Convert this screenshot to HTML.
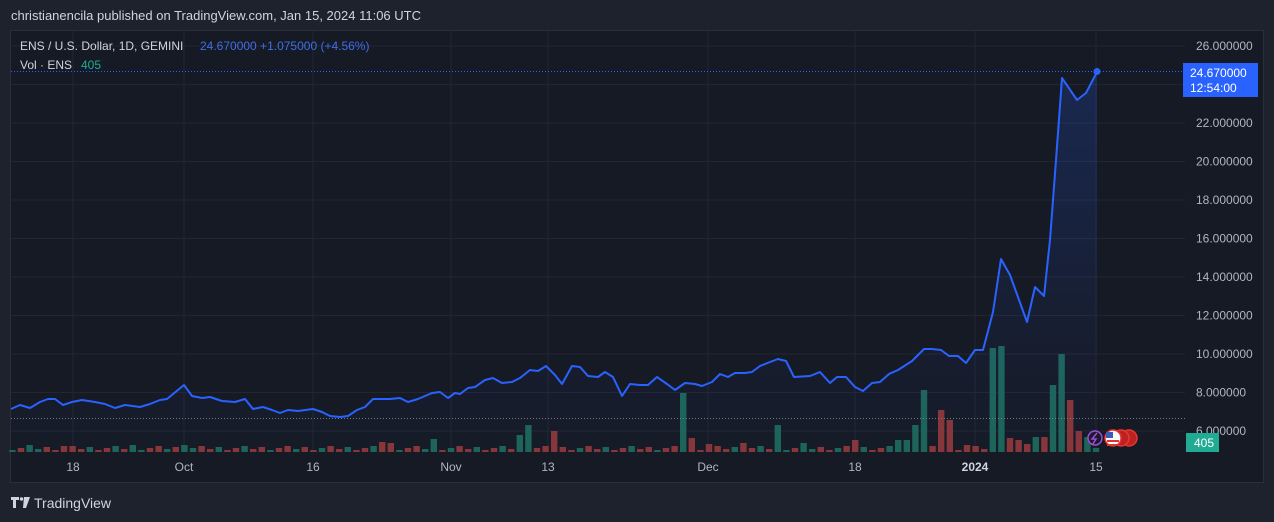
<!DOCTYPE html>
<html><head><meta charset="utf-8"><style>
html,body{margin:0;padding:0;background:#1e222d;width:1274px;height:522px;overflow:hidden;font-family:"Liberation Sans",sans-serif}
.t{position:absolute;white-space:nowrap}
</style></head><body>
<div class="t" style="left:11px;top:8px;font-size:13px;color:#d1d4dc">christianencila published on TradingView.com, Jan 15, 2024 11:06 UTC</div>
<svg width="1274" height="522" style="position:absolute;left:0;top:0" id="s">
<defs><linearGradient id="g" x1="0" y1="0" x2="0" y2="1"><stop offset="0" stop-color="#2962ff" stop-opacity="0.2"/><stop offset="0.7" stop-color="#2962ff" stop-opacity="0.05"/><stop offset="1" stop-color="#2962ff" stop-opacity="0.01"/></linearGradient></defs>
<rect x="10.5" y="30.5" width="1253" height="452" fill="#161a25" stroke="#2a2e39"/>
<g id="grid" stroke="#222633" stroke-width="1"></g>
<g id="vol"></g>
<path id="area" fill="url(#g)"/>
<line x1="11" y1="418.5" x2="1185" y2="418.5" stroke="#787b86" stroke-dasharray="1 2"/>
<line x1="11" y1="71.5" x2="1185" y2="71.5" stroke="#2962ff" stroke-dasharray="1 2"/>
<polyline id="ln" fill="none" stroke="#2962ff" stroke-width="2" stroke-linejoin="round"/>
<circle cx="1097" cy="71.5" r="3.5" fill="#2962ff"/>
<g font-family="Liberation Sans" font-size="12" fill="#b2b5be" id="lab"></g>
<rect x="1183" y="63" width="75" height="34" fill="#2962ff"/>
<text x="1190" y="77" font-size="12" fill="#fff" font-family="Liberation Sans">24.670000</text>
<text x="1190" y="92" font-size="12" fill="#fff" font-family="Liberation Sans">12:54:00</text>
<rect x="1186" y="433" width="33" height="19" fill="#22ab94"/>
<text x="1194" y="447" font-size="12" fill="#fff" font-family="Liberation Sans">405</text>
<circle cx="1095" cy="438" r="7" fill="#1e1a2e" stroke="#9c4ed8" stroke-width="1.5"/>
<path d="M1097 433 L1092 439 L1096 439 L1093 444" stroke="#9c4ed8" stroke-width="1.5" fill="none"/>
<circle cx="1129" cy="438" r="8" fill="#b22" stroke="#e33" stroke-width="1.5"/>
<circle cx="1121" cy="438" r="8" fill="#b22" stroke="#e33" stroke-width="1.5"/>
<circle cx="1113" cy="438" r="8" fill="#fff" stroke="#e33" stroke-width="1.5"/>
<rect x="1107" y="440" width="12" height="2" fill="#d33"/><rect x="1107" y="444" width="12" height="2" fill="#d33"/>
<rect x="1106" y="432" width="7" height="6" fill="#3c5bb8"/>
<text x="20" y="50" font-size="12" fill="#d1d4dc" font-family="Liberation Sans">ENS / U.S. Dollar, 1D, GEMINI</text>
<text x="200" y="50" font-size="12" fill="#3f6ee8" font-family="Liberation Sans">24.670000  +1.075000 (+4.56%)</text>
<text x="20" y="69" font-size="12" fill="#d1d4dc" font-family="Liberation Sans">Vol · ENS</text>
<text x="81" y="69" font-size="12" fill="#22ab94" font-family="Liberation Sans">405</text>
<g fill="#d1d4dc"><path d="M11 497h8v3h-3v8h-3v-8h-2z"/><circle cx="21.5" cy="499" r="1.7"/><path d="M24 497h6l-4 11h-3z"/></g>
<text x="34" y="508" font-size="14" fill="#d1d4dc" font-family="Liberation Sans">TradingView</text>
</svg>
<script>
var ns="http://www.w3.org/2000/svg";function el(p,t,a,txt){var e=document.createElementNS(ns,t);for(var k in a)e.setAttribute(k,a[k]);if(txt)e.textContent=txt;document.getElementById(p).appendChild(e);return e}
for(var v=26;v>=6;v-=2){var y=46+(26-v)*19.25;el("grid","line",{x1:11,x2:1185,y1:y,y2:y});el("lab","text",{x:1196,y:y+4},v.toFixed(6))}
var xs=[[73,"18"],[184,"Oct"],[313,"16"],[451,"Nov"],[548,"13"],[708,"Dec"],[855,"18"],[975,"2024"],[1096,"15"]];
xs.forEach(function(a){el("grid","line",{x1:a[0],x2:a[0],y1:31,y2:452});var t=el("lab","text",{x:a[0],y:471,"text-anchor":"middle"},a[1]);if(a[1]=="2024"){t.setAttribute("font-weight","bold");t.setAttribute("fill","#d1d4dc")}});
var P=[11,409,20,405,30,408,40,402,48,399,55,399,63,405,72,402,82,400,95,402,105,404,115,408,125,405,140,407,150,404,160,400,167,399,184,385,192,396,202,398,210,397,222,401,235,402,245,399,253,409,263,407,272,410,280,413,288,410,298,411,313,409,322,412,330,416,340,417,348,416,357,410,365,407,373,399,390,399,400,398,408,402,418,399,432,393,440,392,448,398,455,393,460,394,468,388,475,387,485,380,493,378,502,383,512,382,520,378,530,370,538,371,546,366,555,375,562,384,572,366,580,367,588,376,598,377,605,372,613,377,622,396,630,384,640,385,648,385,657,377,667,384,675,390,685,383,695,384,702,386,712,382,720,374,728,377,735,373,745,373,752,372,760,366,770,362,778,359,786,361,794,377,810,376,820,372,830,383,837,377,846,377,855,387,863,391,872,383,880,382,889,374,898,370,912,361,924,349,932,349,941,350,949,356,958,356,966,363,975,350,983,350,993,312,1001,259,1010,275,1027,322,1035,287,1044,296,1050,240,1056,160,1062,78,1077,100,1086,93,1097,72];
var s="";for(var i=0;i<P.length;i+=2)s+=P[i]+","+P[i+1]+" ";document.getElementById("ln").setAttribute("points",s);
document.getElementById("area").setAttribute("d","M11,452 L"+s.trim().split(" ").join(" L")+" L1097,452Z");
var big={679:[59,1],526:[27,1],517:[17,1],553:[21,0],430:[13,1],381:[10,0],183:[7,1],775:[27,1],921:[62,1],941:[42,0],947:[32,0],913:[27,1],905:[12,1],992:[104,1],1000:[106,1],1053:[67,1],1060:[98,1],1069:[52,0],1078:[21,0],1087:[15,1],805:[9,1],858:[12,0],390:[9,0],60:[6,0],28:[7,1],135:[7,1],706:[8,0],741:[9,0],690:[14,0],897:[12,1],968:[7,0],1009:[14,0],1017:[12,0],1043:[15,0],1035:[15,1],1026:[8,0],1086:[15,1]};
for(var i=0;i<=126;i++){var x=1096-(126-i)*8.6;var h=2+((i*37)%5),c=(i*7)%3==0?1:0;for(var k in big){if(Math.abs(k-x)<4.3){h=big[k][0];c=big[k][1]}}
el("vol","rect",{x:x-3.2,y:452-h,width:6.4,height:h,fill:c?"#1d6558":"#883638"})}
</script>
</body></html>
